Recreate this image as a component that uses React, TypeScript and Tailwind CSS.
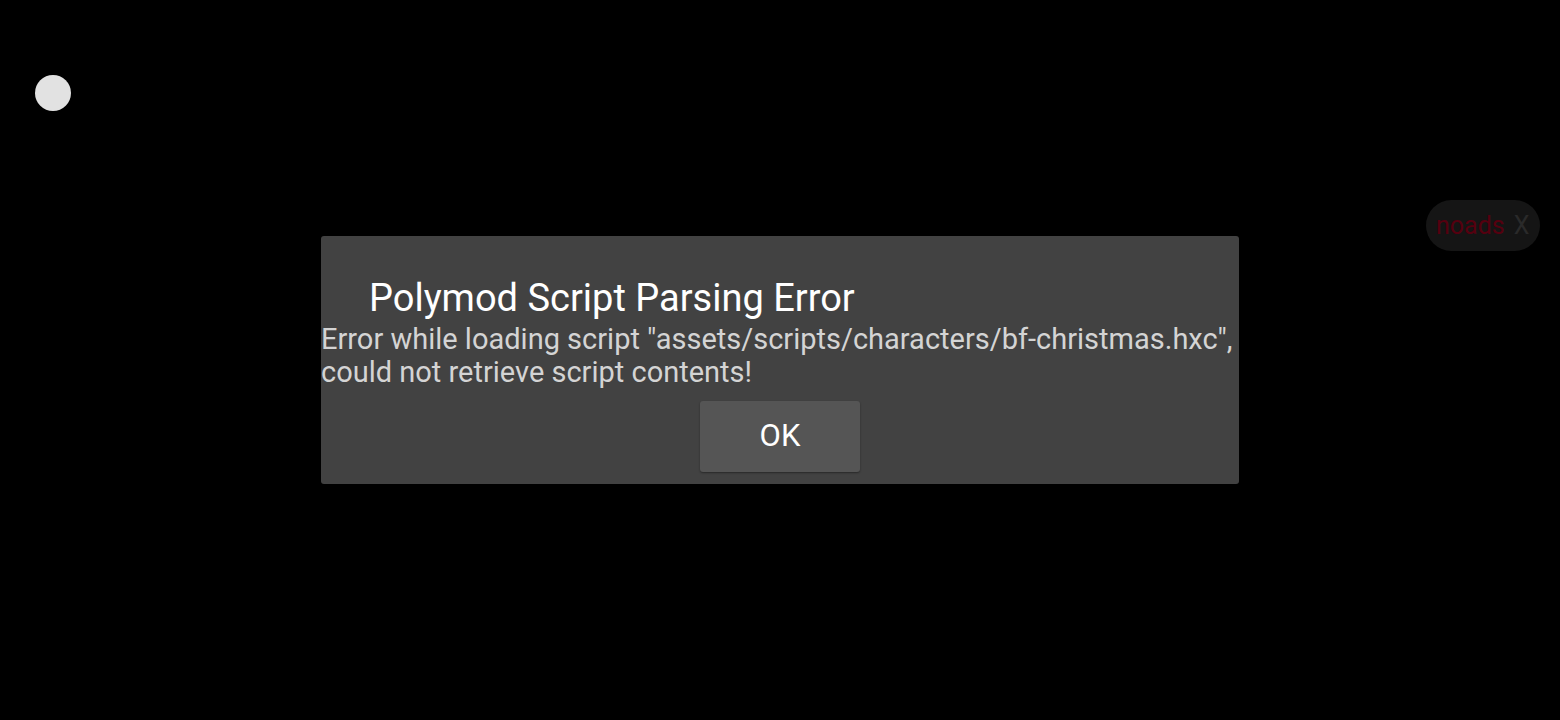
export default function App() {
  return (
    <div className="relative w-[1560px] h-[720px] bg-black flex items-center justify-center overflow-hidden" style={{ fontFamily: "Roboto, 'Noto Sans', sans-serif" }}>
      <div className="absolute left-[35px] top-[75px] w-[36px] h-[36px] rounded-full bg-[#e2e2e2]" />
      <div className="absolute left-[1426px] top-[200px] w-[114px] h-[51px] rounded-full bg-[#151515] flex items-center pl-[10px] gap-[9px]">
        <span className="text-[25px] leading-none text-[#55000f]">noads</span>
        <span className="text-[25px] leading-none text-[#2a2a2a]">X</span>
      </div>
      <div className="w-[918px] h-[248px] rounded-[3px] bg-[#424242] flex flex-col pt-[38px]">
        <div className="pl-[48px] text-[38px] leading-[48px] text-white">Polymod Script Parsing Error</div>
        <div className="text-[29px] leading-[33px] text-[#d4d4d4] mt-[1px]">
          Error while loading script "assets/scripts/characters/bf-christmas.hxc",<br />could not retrieve script contents!
        </div>
        <div className="flex justify-center mt-[12px]">
          <div className="w-[160px] h-[71px] rounded-[3px] bg-[#555555] flex items-center justify-center text-[31px] text-white shadow-[0_1px_2px_rgba(0,0,0,0.4)]">OK</div>
        </div>
      </div>
    </div>
  );
}
